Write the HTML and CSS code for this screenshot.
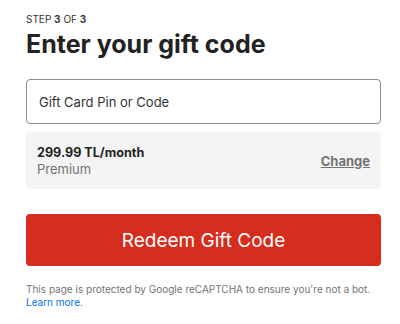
FILE: index.html
```
<!DOCTYPE html>
<html lang="en">
<head>
    <meta charset="UTF-8">
    <meta name="viewport" content="width=device-width, initial-scale=1.0">
    <title>Enter your gift code</title>
    <link rel="stylesheet" href="styles.css">
</head>
<body>
    <div class="container">
        <div class="step">STEP <b>3</b> OF <b>3</b></div>
        <h1 class="title">Enter your gift code</h1>

        <div class="field">
            <input type="text" id="giftCode" placeholder="Gift Card Pin or Code">
        </div>

        <div class="plan">
            <div class="plan-info">
                <div class="plan-price">299.99 TL/month</div>
                <div class="plan-name">Premium</div>
            </div>
            <a href="#" class="plan-change">Change</a>
        </div>

        <button class="redeem">Redeem Gift Code</button>

        <p class="notice">
            This page is protected by Google reCAPTCHA to ensure you're not a bot.
            <a href="#">Learn more.</a>
        </p>
    </div>
</body>
</html>
```

FILE: styles.css
```
body {
    margin: 0;
    font-family: Inter, "Liberation Sans", sans-serif;
    background-color: white;
    color: #333;
}

.container {
    padding: 13px 19px 0 26px;
}

.step {
    font-size: 10px;
    line-height: 12px;
    color: #333;
}

.title {
    margin: 4px 0 0;
    font-size: 25px;
    line-height: 31px;
    font-weight: 700;
    color: #222;
}

.field {
    margin-top: 19px;
}

.field input {
    box-sizing: border-box;
    width: 100%;
    height: 45px;
    padding: 0 12px;
    border: 1px solid #8c8c8c;
    border-radius: 4px;
    font-family: inherit;
    font-size: 13px;
    color: #333;
}

.field input::placeholder {
    color: #333;
}

.plan {
    display: flex;
    justify-content: space-between;
    align-items: center;
    margin-top: 8px;
    height: 57px;
    padding: 0 11px;
    background-color: #f4f4f4;
    border-radius: 4px;
}

.plan-price {
    font-size: 12.6px;
    font-weight: 700;
    line-height: 17px;
    color: #222;
}

.plan-name {
    font-size: 13px;
    line-height: 17px;
    color: #737373;
}

.plan-change {
    font-size: 13px;
    font-weight: 700;
    color: #737373;
    text-decoration: underline;
}

.redeem {
    display: block;
    width: 100%;
    height: 52px;
    margin-top: 25px;
    border: none;
    border-radius: 4px;
    background-color: #d72d1f;
    color: white;
    font-family: inherit;
    font-size: 19px;
    cursor: pointer;
}

.notice {
    margin: 17px 0 0;
    font-size: 10px;
    line-height: 13px;
    color: #737373;
}

.notice a {
    color: #0071eb;
    text-decoration: none;
}
```
